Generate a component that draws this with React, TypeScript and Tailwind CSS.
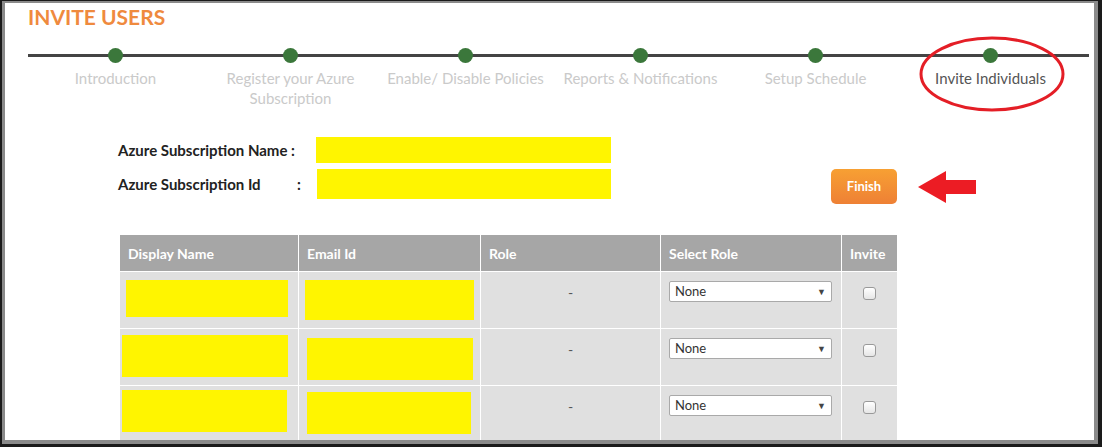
const steps = [
  'Introduction',
  'Register your Azure Subscription',
  'Enable/ Disable Policies',
  'Reports & Notifications',
  'Setup Schedule',
  'Invite Individuals',
];

const rows = [
  { name: 'ml-[6px] mt-[8px] w-[162px] h-[37px]', email: 'ml-[6px] mt-[8px] w-[169px] h-[40px]' },
  { name: 'ml-[2px] mt-[6px] w-[166px] h-[42px]', email: 'ml-[8px] mt-[9px] w-[166px] h-[42px]' },
  { name: 'ml-[2px] mt-[4px] w-[165px] h-[42px]', email: 'ml-[8px] mt-[6px] w-[164px] h-[42px]' },
];

function Stepper() {
  return (
    <div className="relative ml-[23px] mt-[10px] w-[1061px]">
      <div className="absolute left-0 right-0 top-[15px] h-[3px] bg-[#444]" />
      <div className="relative flex">
        {steps.map((step, i) => (
          <div key={step} className="w-[175px] flex flex-col items-center">
            <div className="mt-[9px] w-[15px] h-[15px] rounded-full bg-[#3b773b]" />
            <div
              className={`mt-[5px] text-center text-[15px] leading-[20px] w-[172px] ${
                i === steps.length - 1 ? 'text-[#555]' : 'text-[#cacaca]'
              }`}
            >
              {step}
            </div>
          </div>
        ))}
      </div>
      <svg
        className="absolute left-[891px] top-[-5px]"
        width="150"
        height="80"
        viewBox="0 0 150 80"
      >
        <ellipse cx="73" cy="40" rx="71" ry="36" fill="none" stroke="#e41e26" strokeWidth="3" />
      </svg>
    </div>
  );
}

function Form() {
  return (
    <div className="flex ml-[113px] mt-[29px]">
      <div className="flex flex-col gap-[6px] text-[15px] font-bold text-[#222]">
        <div className="flex items-center h-[26px]">
          <span className="w-[198px]">Azure Subscription Name :</span>
          <div className="w-[295px] h-[26px] bg-[#fff500]" />
        </div>
        <div className="flex items-center h-[30px]">
          <span className="w-[179px]">Azure Subscription Id</span>
          <span className="w-[20px]">:</span>
          <div className="w-[294px] h-[30px] bg-[#fff500]" />
        </div>
      </div>
      <div className="ml-[220px] mt-[32px] flex items-center">
        <button className="w-[66px] h-[35px] rounded-[5px] bg-gradient-to-b from-[#f7a033] to-[#ee8035] text-white font-bold text-[13px]">
          Finish
        </button>
        <svg className="ml-[21px]" width="60" height="34" viewBox="0 0 60 34">
          <polygon points="0,17 28,1 28,10 58,10 58,24 28,24 28,33" fill="#ec1c24" />
        </svg>
      </div>
    </div>
  );
}

function Table() {
  return (
    <table className="ml-[114px] mt-[30px] border-collapse text-[14px]">
      <thead>
        <tr className="bg-[#a6a6a6] text-white font-bold text-left h-[37px]">
          <th className="w-[179px] border border-white px-[8px]">Display Name</th>
          <th className="w-[182px] border border-white px-[8px]">Email Id</th>
          <th className="w-[180px] border border-white px-[8px]">Role</th>
          <th className="w-[181px] border border-white px-[8px]">Select Role</th>
          <th className="w-[56px] border border-white px-[8px]">Invite</th>
        </tr>
      </thead>
      <tbody>
        {rows.map((row, i) => (
          <tr key={i} className="bg-[#e0e0e0] h-[57px] align-top">
            <td className="border border-white p-0">
              <div className={`${row.name} bg-[#fff500]`} />
            </td>
            <td className="border border-white p-0">
              <div className={`${row.email} bg-[#fff500]`} />
            </td>
            <td className="border border-white p-0 text-center text-[#555] pt-[10px]">-</td>
            <td className="border border-white p-0">
              <div className="ml-[8px] mt-[9px] w-[163px] h-[21px] bg-white border border-[#a9a9a9] rounded-[2px] flex items-center justify-between px-[5px] text-[13px] text-[#333]">
                <span>None</span>
                <span className="text-[9px] text-[#444]">▼</span>
              </div>
            </td>
            <td className="border border-white p-0">
              <div className="mx-auto mt-[15px] w-[13px] h-[13px] rounded-[3px] border border-[#999] bg-gradient-to-b from-white to-[#e6e6e6]" />
            </td>
          </tr>
        ))}
      </tbody>
    </table>
  );
}

export default function App() {
  return (
    <div
      className="w-[1102px] h-[447px] bg-[#1a1a1a] pl-[2px] pt-[1px] pr-[4px] pb-[3px]"
      style={{ fontFamily: 'Lato, "Open Sans", sans-serif' }}
    >
      <div className="w-full h-full border-l-[3px] border-t-[2px] border-r-[4px] border-b-[4px] border-[#8a8a8a] bg-white overflow-hidden">
        <h1 className="ml-[23px] mt-[2px] text-[21px] leading-[24px] font-bold text-[#ef8a3e]">
          INVITE USERS
        </h1>
        <Stepper />
        <Form />
        <Table />
      </div>
    </div>
  );
}
